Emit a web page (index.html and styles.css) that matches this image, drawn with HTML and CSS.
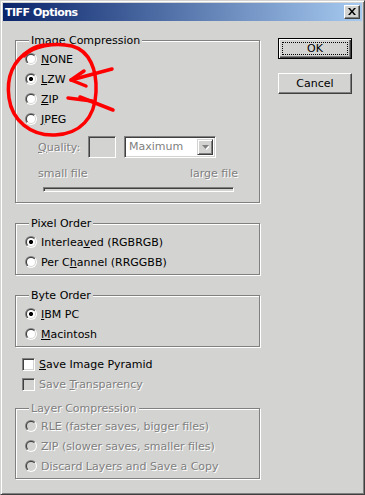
FILE: index.html
```html
<!DOCTYPE html>
<html>
<head>
<meta charset="utf-8">
<title>TIFF Options</title>
<link rel="stylesheet" href="styles.css">
</head>
<body>
<div class="window">
  <div class="titlebar">
    <span class="title">TIFF Options</span>
    <span class="close-btn">
      <svg width="8" height="7" viewBox="0 0 8 7"><path d="M0 0h2l2 2.5L6 0h2L5 3.5 8 7H6L4 4.5 2 7H0l3-3.5z" fill="#000"/></svg>
    </span>
  </div>
  <div class="content">
    <div class="left">
      <div class="group g-comp">
        <span class="legend">Image Compression</span>
        <div class="row"><span class="radio"></span><span class="lbl"><u>N</u>ONE</span></div>
        <div class="row"><span class="radio checked"></span><span class="lbl"><u>L</u>ZW</span></div>
        <div class="row"><span class="radio"></span><span class="lbl"><u>Z</u>IP</span></div>
        <div class="row"><span class="radio"></span><span class="lbl"><u>J</u>PEG</span></div>
        <div class="quality-row">
          <span class="qlabel disabled"><u>Q</u>uality:</span>
          <span class="qbox"></span>
          <span class="combo">
            <span class="combo-text">Maximum</span>
            <span class="combo-btn"><svg width="7" height="5" viewBox="0 0 7 5"><path d="M1 1h7l-3.5 4z" fill="#fff"/><path d="M0 0h7l-3.5 4z" fill="#808080"/></svg></span>
          </span>
        </div>
        <div class="size-row disabled"><span>small file</span><span>large file</span></div>
        <div class="slider"></div>
      </div>

      <div class="group g-pixel">
        <span class="legend">Pixel Order</span>
        <div class="row"><span class="radio checked"></span><span class="lbl">Interlea<u>v</u>ed (RGBRGB)</span></div>
        <div class="row"><span class="radio"></span><span class="lbl">Per C<u>h</u>annel (RRGGBB)</span></div>
      </div>

      <div class="group g-byte">
        <span class="legend">Byte Order</span>
        <div class="row"><span class="radio checked"></span><span class="lbl"><u>I</u>BM PC</span></div>
        <div class="row"><span class="radio"></span><span class="lbl"><u>M</u>acintosh</span></div>
      </div>

      <div class="check-row first-check"><span class="checkbox"></span><span class="lbl"><u>S</u>ave Image Pyramid</span></div>
      <div class="check-row"><span class="checkbox disabled-box"></span><span class="lbl disabled">Save <u>T</u>ransparency</span></div>

      <div class="group g-layer">
        <span class="legend disabled">Layer Compression</span>
        <div class="row"><span class="radio off"></span><span class="lbl disabled">RLE (faster saves, bigger files)</span></div>
        <div class="row"><span class="radio off"></span><span class="lbl disabled">ZIP (slower saves, smaller files)</span></div>
        <div class="row"><span class="radio off"></span><span class="lbl disabled">Discard Layers and Save a Copy</span></div>
      </div>
    </div>
    <div class="right">
      <div class="btn default"><span class="focus">OK</span></div>
      <div class="btn cancel">Cancel</div>
    </div>
  </div>
  <svg class="annot" width="365" height="495" viewBox="0 0 365 495">
    <g fill="none" stroke="#ff0000" stroke-width="3.5" stroke-linecap="round" stroke-linejoin="round">
      <path d="M24 56 C32 46 55 42 72 46 C90 51 97 70 96 92 C95 118 80 134 55 135 C30 136 12 120 9 98 C6 76 14 60 30 50 C36 46 42 45 48 45"/>
      <path d="M112 69 L71 80"/>
      <path d="M84 71 L71 80 L86 86"/>
      <path d="M68 98 L92 101"/>
      <path d="M80 97 L113 110"/>
    </g>
  </svg>
</div>
</body>
</html>
```
FILE: styles.css
```css
* { box-sizing: border-box; }
body { margin: 0; background: #ffffff; }

.window {
  position: relative;
  width: 365px;
  height: 495px;
  background: #d3d3d1;
  border: 1px solid;
  border-color: #d3d3d1 #404040 #404040 #d3d3d1;
  box-shadow: inset 1px 1px #ffffff, inset -1px -1px #808080;
  padding: 2px;
  font-family: "DejaVu Sans", sans-serif;
  font-size: 11px;
  line-height: 13px;
  color: #000000;
}

.titlebar {
  height: 18px;
  background: linear-gradient(to right, #0a246a, #a6caf0);
  display: flex;
  align-items: center;
  justify-content: space-between;
  padding: 0 2px 0 2px;
}
.title {
  color: #ffffff;
  font-weight: bold;
  font-family: "DejaVu Sans", sans-serif;
  font-size: 11px;
  letter-spacing: -0.5px;
}
.close-btn {
  width: 16px;
  height: 14px;
  background: #d3d3d1;
  border: 1px solid;
  border-color: #ffffff #404040 #404040 #ffffff;
  box-shadow: inset -1px -1px #808080;
  display: flex;
  align-items: center;
  justify-content: center;
  padding-bottom: 1px;
}

.content {
  display: flex;
  align-items: flex-start;
  padding: 17px 10px 0 12px;
}
.left {
  width: 246px;
  padding-top: 2px;
  display: flex;
  flex-direction: column;
}
.right {
  margin-left: 18px;
  width: 74px;
  display: flex;
  flex-direction: column;
  gap: 14px;
}

.group {
  position: relative;
  border: 1px solid #808080;
  box-shadow: inset 1px 1px #ffffff, 1px 1px #ffffff;
  padding: 8px 0 0 9px;
}
.legend {
  position: absolute;
  left: 13px;
  top: -7px;
  padding: 0 2px;
  background: #d3d3d1;
}
.g-comp { height: 163px; }
.g-pixel { height: 52px; margin-top: 20px; }
.g-byte { height: 52px; margin-top: 20px; }
.g-layer { height: 71px; margin-top: 14px; padding-top: 7px; }

.row {
  height: 20px;
  display: flex;
  align-items: center;
  gap: 4px;
}

.radio {
  position: relative;
  width: 12px;
  height: 12px;
  border-radius: 50%;
  background: linear-gradient(135deg, #808080 50%, #ffffff 50%);
  flex: none;
}
.radio::before {
  content: "";
  position: absolute;
  inset: 1px;
  border-radius: 50%;
  background: linear-gradient(135deg, #404040 50%, #d3d3d1 50%);
}
.radio::after {
  content: "";
  position: absolute;
  inset: 2px;
  border-radius: 50%;
  background: #ffffff;
}
.radio.off::after { background: #d3d3d1; }
.radio.checked::after {
  background: radial-gradient(circle, #000000 0 2px, #ffffff 2.2px);
}

.disabled { color: #808080; text-shadow: 1px 1px #ffffff; }
.disabled u { text-decoration-color: #808080; }

.quality-row {
  display: flex;
  align-items: center;
  margin-top: 7px;
  margin-left: 13px;
  height: 22px;
}
.qlabel { width: 50px; }
.qbox {
  width: 28px;
  height: 22px;
  border: 1px solid;
  border-color: #808080 #ffffff #ffffff #808080;
  box-shadow: inset 1px 1px #404040, inset -1px -1px #d3d3d1;
}
.combo {
  margin-left: 8px;
  width: 92px;
  height: 22px;
  display: flex;
  border: 1px solid;
  border-color: #808080 #ffffff #ffffff #808080;
  box-shadow: inset 1px 1px #404040, inset -1px -1px #d3d3d1;
  background: #ffffff;
  padding: 2px;
}
.combo-text {
  flex: 1;
  color: #808080;
  padding-left: 2px;
  line-height: 16px;
}
.combo-btn {
  width: 16px;
  height: 16px;
  background: #d3d3d1;
  border: 1px solid;
  border-color: #d3d3d1 #404040 #404040 #d3d3d1;
  box-shadow: inset 1px 1px #ffffff, inset -1px -1px #808080;
  display: flex;
  align-items: center;
  justify-content: center;
}

.size-row {
  display: flex;
  justify-content: space-between;
  width: 200px;
  margin-left: 13px;
  margin-top: 9px;
}
.slider {
  width: 191px;
  height: 5px;
  margin-left: 18px;
  margin-top: 7px;
  border: 1px solid;
  border-color: #808080 #ffffff #ffffff #808080;
  box-shadow: inset 1px 1px #404040;
}

.check-row {
  height: 20px;
  display: flex;
  align-items: center;
  gap: 4px;
  margin-left: 7px;
}
.check-row.first-check { margin-top: 7px; }
.checkbox {
  width: 13px;
  height: 13px;
  background: #ffffff;
  border: 1px solid;
  border-color: #808080 #ffffff #ffffff #808080;
  box-shadow: inset 1px 1px #404040, inset -1px -1px #d3d3d1;
  flex: none;
}
.checkbox.disabled-box { background: #d3d3d1; }

.btn {
  width: 74px;
  height: 21px;
  display: flex;
  align-items: center;
  justify-content: center;
  background: #d3d3d1;
}
.btn.default {
  border: 1px solid #000000;
  box-shadow: inset 1px 1px #ffffff, inset -1px -1px #404040, inset -2px -2px #808080;
  padding: 3px;
}
.btn.default .focus {
  width: 100%;
  height: 100%;
  border: 1px dotted #000000;
  display: flex;
  align-items: center;
  justify-content: center;
}
.btn.cancel {
  border: 1px solid;
  border-color: #ffffff #404040 #404040 #ffffff;
  box-shadow: inset -1px -1px #808080;
}

.annot {
  position: absolute;
  left: -1px;
  top: -1px;
  pointer-events: none;
}
```
